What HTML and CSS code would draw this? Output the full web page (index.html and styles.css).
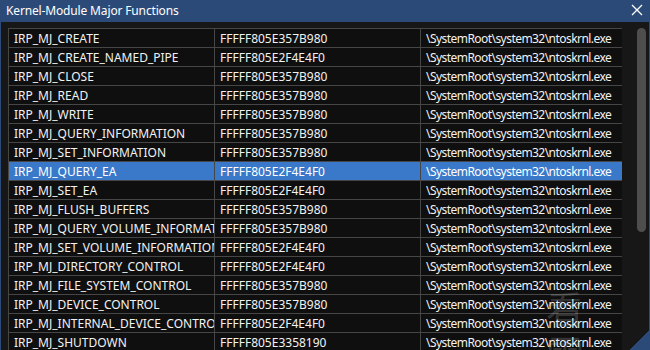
FILE: index.html
```html
<!DOCTYPE html>
<html lang="en">
<head>
    <meta charset="UTF-8">
    <title>Kernel-Module Major Functions</title>
    <link rel="stylesheet" href="styles.css">
</head>
<body>
    <div class="window">
        <div class="titlebar">
            <span class="title">Kernel-Module Major Functions</span>
            <span class="close">
                <svg width="12" height="12" viewBox="0 0 12 12"><path d="M1 1 L11 11 M11 1 L1 11" stroke="#fff" stroke-width="1.3"/></svg>
            </span>
        </div>
        <div class="content">
            <div class="list">
                <table>
                    <colgroup>
                        <col style="width: 206px">
                        <col style="width: 206px">
                        <col style="width: 202px">
                    </colgroup>
                    <tbody>
                        <tr><td>IRP_MJ_CREATE</td><td>FFFFF805E357B980</td><td class="path">\SystemRoot\system32\ntoskrnl.exe</td></tr>
                        <tr><td>IRP_MJ_CREATE_NAMED_PIPE</td><td>FFFFF805E2F4E4F0</td><td class="path">\SystemRoot\system32\ntoskrnl.exe</td></tr>
                        <tr><td>IRP_MJ_CLOSE</td><td>FFFFF805E357B980</td><td class="path">\SystemRoot\system32\ntoskrnl.exe</td></tr>
                        <tr><td>IRP_MJ_READ</td><td>FFFFF805E357B980</td><td class="path">\SystemRoot\system32\ntoskrnl.exe</td></tr>
                        <tr><td>IRP_MJ_WRITE</td><td>FFFFF805E357B980</td><td class="path">\SystemRoot\system32\ntoskrnl.exe</td></tr>
                        <tr><td>IRP_MJ_QUERY_INFORMATION</td><td>FFFFF805E357B980</td><td class="path">\SystemRoot\system32\ntoskrnl.exe</td></tr>
                        <tr><td>IRP_MJ_SET_INFORMATION</td><td>FFFFF805E357B980</td><td class="path">\SystemRoot\system32\ntoskrnl.exe</td></tr>
                        <tr class="selected"><td>IRP_MJ_QUERY_EA</td><td>FFFFF805E2F4E4F0</td><td class="path">\SystemRoot\system32\ntoskrnl.exe</td></tr>
                        <tr><td>IRP_MJ_SET_EA</td><td>FFFFF805E2F4E4F0</td><td class="path">\SystemRoot\system32\ntoskrnl.exe</td></tr>
                        <tr><td>IRP_MJ_FLUSH_BUFFERS</td><td>FFFFF805E357B980</td><td class="path">\SystemRoot\system32\ntoskrnl.exe</td></tr>
                        <tr><td>IRP_MJ_QUERY_VOLUME_INFORMATION</td><td>FFFFF805E357B980</td><td class="path">\SystemRoot\system32\ntoskrnl.exe</td></tr>
                        <tr><td>IRP_MJ_SET_VOLUME_INFORMATION</td><td>FFFFF805E2F4E4F0</td><td class="path">\SystemRoot\system32\ntoskrnl.exe</td></tr>
                        <tr><td>IRP_MJ_DIRECTORY_CONTROL</td><td>FFFFF805E2F4E4F0</td><td class="path">\SystemRoot\system32\ntoskrnl.exe</td></tr>
                        <tr><td>IRP_MJ_FILE_SYSTEM_CONTROL</td><td>FFFFF805E357B980</td><td class="path">\SystemRoot\system32\ntoskrnl.exe</td></tr>
                        <tr><td>IRP_MJ_DEVICE_CONTROL</td><td>FFFFF805E357B980</td><td class="path">\SystemRoot\system32\ntoskrnl.exe</td></tr>
                        <tr><td>IRP_MJ_INTERNAL_DEVICE_CONTROL</td><td>FFFFF805E2F4E4F0</td><td class="path">\SystemRoot\system32\ntoskrnl.exe</td></tr>
                        <tr><td>IRP_MJ_SHUTDOWN</td><td>FFFFF805E3358190</td><td class="path">\SystemRoot\system32\ntoskrnl.exe</td></tr>
                    </tbody>
                </table>
                <span class="watermark">看雪</span>
            </div>
            <div class="scrollbar">
                <div class="thumb"></div>
            </div>
        </div>
    </div>
</body>
</html>
```

FILE: styles.css
```css
body {
    margin: 0;
    background: #2b4a78;
    font-family: "Noto Sans", "Open Sans", Arial, sans-serif;
    overflow: hidden;
}

.window {
    width: 650px;
    height: 350px;
    box-sizing: border-box;
    border-left: 1px solid #2b4a78;
    border-right: 1px solid #2b4a78;
    background: linear-gradient(135deg, #171717 98%, #2b4a78 98%);
    display: flex;
    flex-direction: column;
    overflow: hidden;
}

.titlebar {
    height: 22px;
    flex-shrink: 0;
    background: #2b4a78;
    display: flex;
    align-items: center;
    justify-content: space-between;
    padding: 0 6px 0 5px;
}

.title {
    color: #fff;
    font-size: 12px;
    letter-spacing: -0.15px;
    position: relative;
    top: -1px;
}

.close {
    display: flex;
    position: relative;
    top: -1px;
}

.content {
    flex: 1;
    display: flex;
    padding: 6px 0 0 7px;
    min-height: 0;
}

.list {
    position: relative;
    width: 615px;
    overflow: hidden;
}

table {
    table-layout: fixed;
    border-collapse: collapse;
    width: 615px;
    background: #0f0f0f;
    color: #f2f2f2;
    font-size: 12px;
}

td {
    height: 18px;
    padding: 1px 0 0 5px;
    box-sizing: border-box;
    border: 1px solid #464646;
    white-space: nowrap;
    overflow: hidden;
    line-height: 17px;
}

td.path {
    letter-spacing: -0.55px;
}

tr.selected td {
    background: #3a79c9;
    color: #fff;
}

.watermark {
    position: absolute;
    left: 538px;
    top: 258px;
    font-size: 38px;
    line-height: 44px;
    letter-spacing: 2px;
    color: rgba(255, 255, 255, 0.16);
    font-family: "Noto Sans CJK SC", sans-serif;
    pointer-events: none;
}

.scrollbar {
    width: 14px;
    margin-left: 13px;
    position: relative;
}

.thumb {
    position: absolute;
    left: 2px;
    top: 0;
    width: 9px;
    height: 204px;
    background: #4e4e4e;
    border-radius: 5px;
}
```
